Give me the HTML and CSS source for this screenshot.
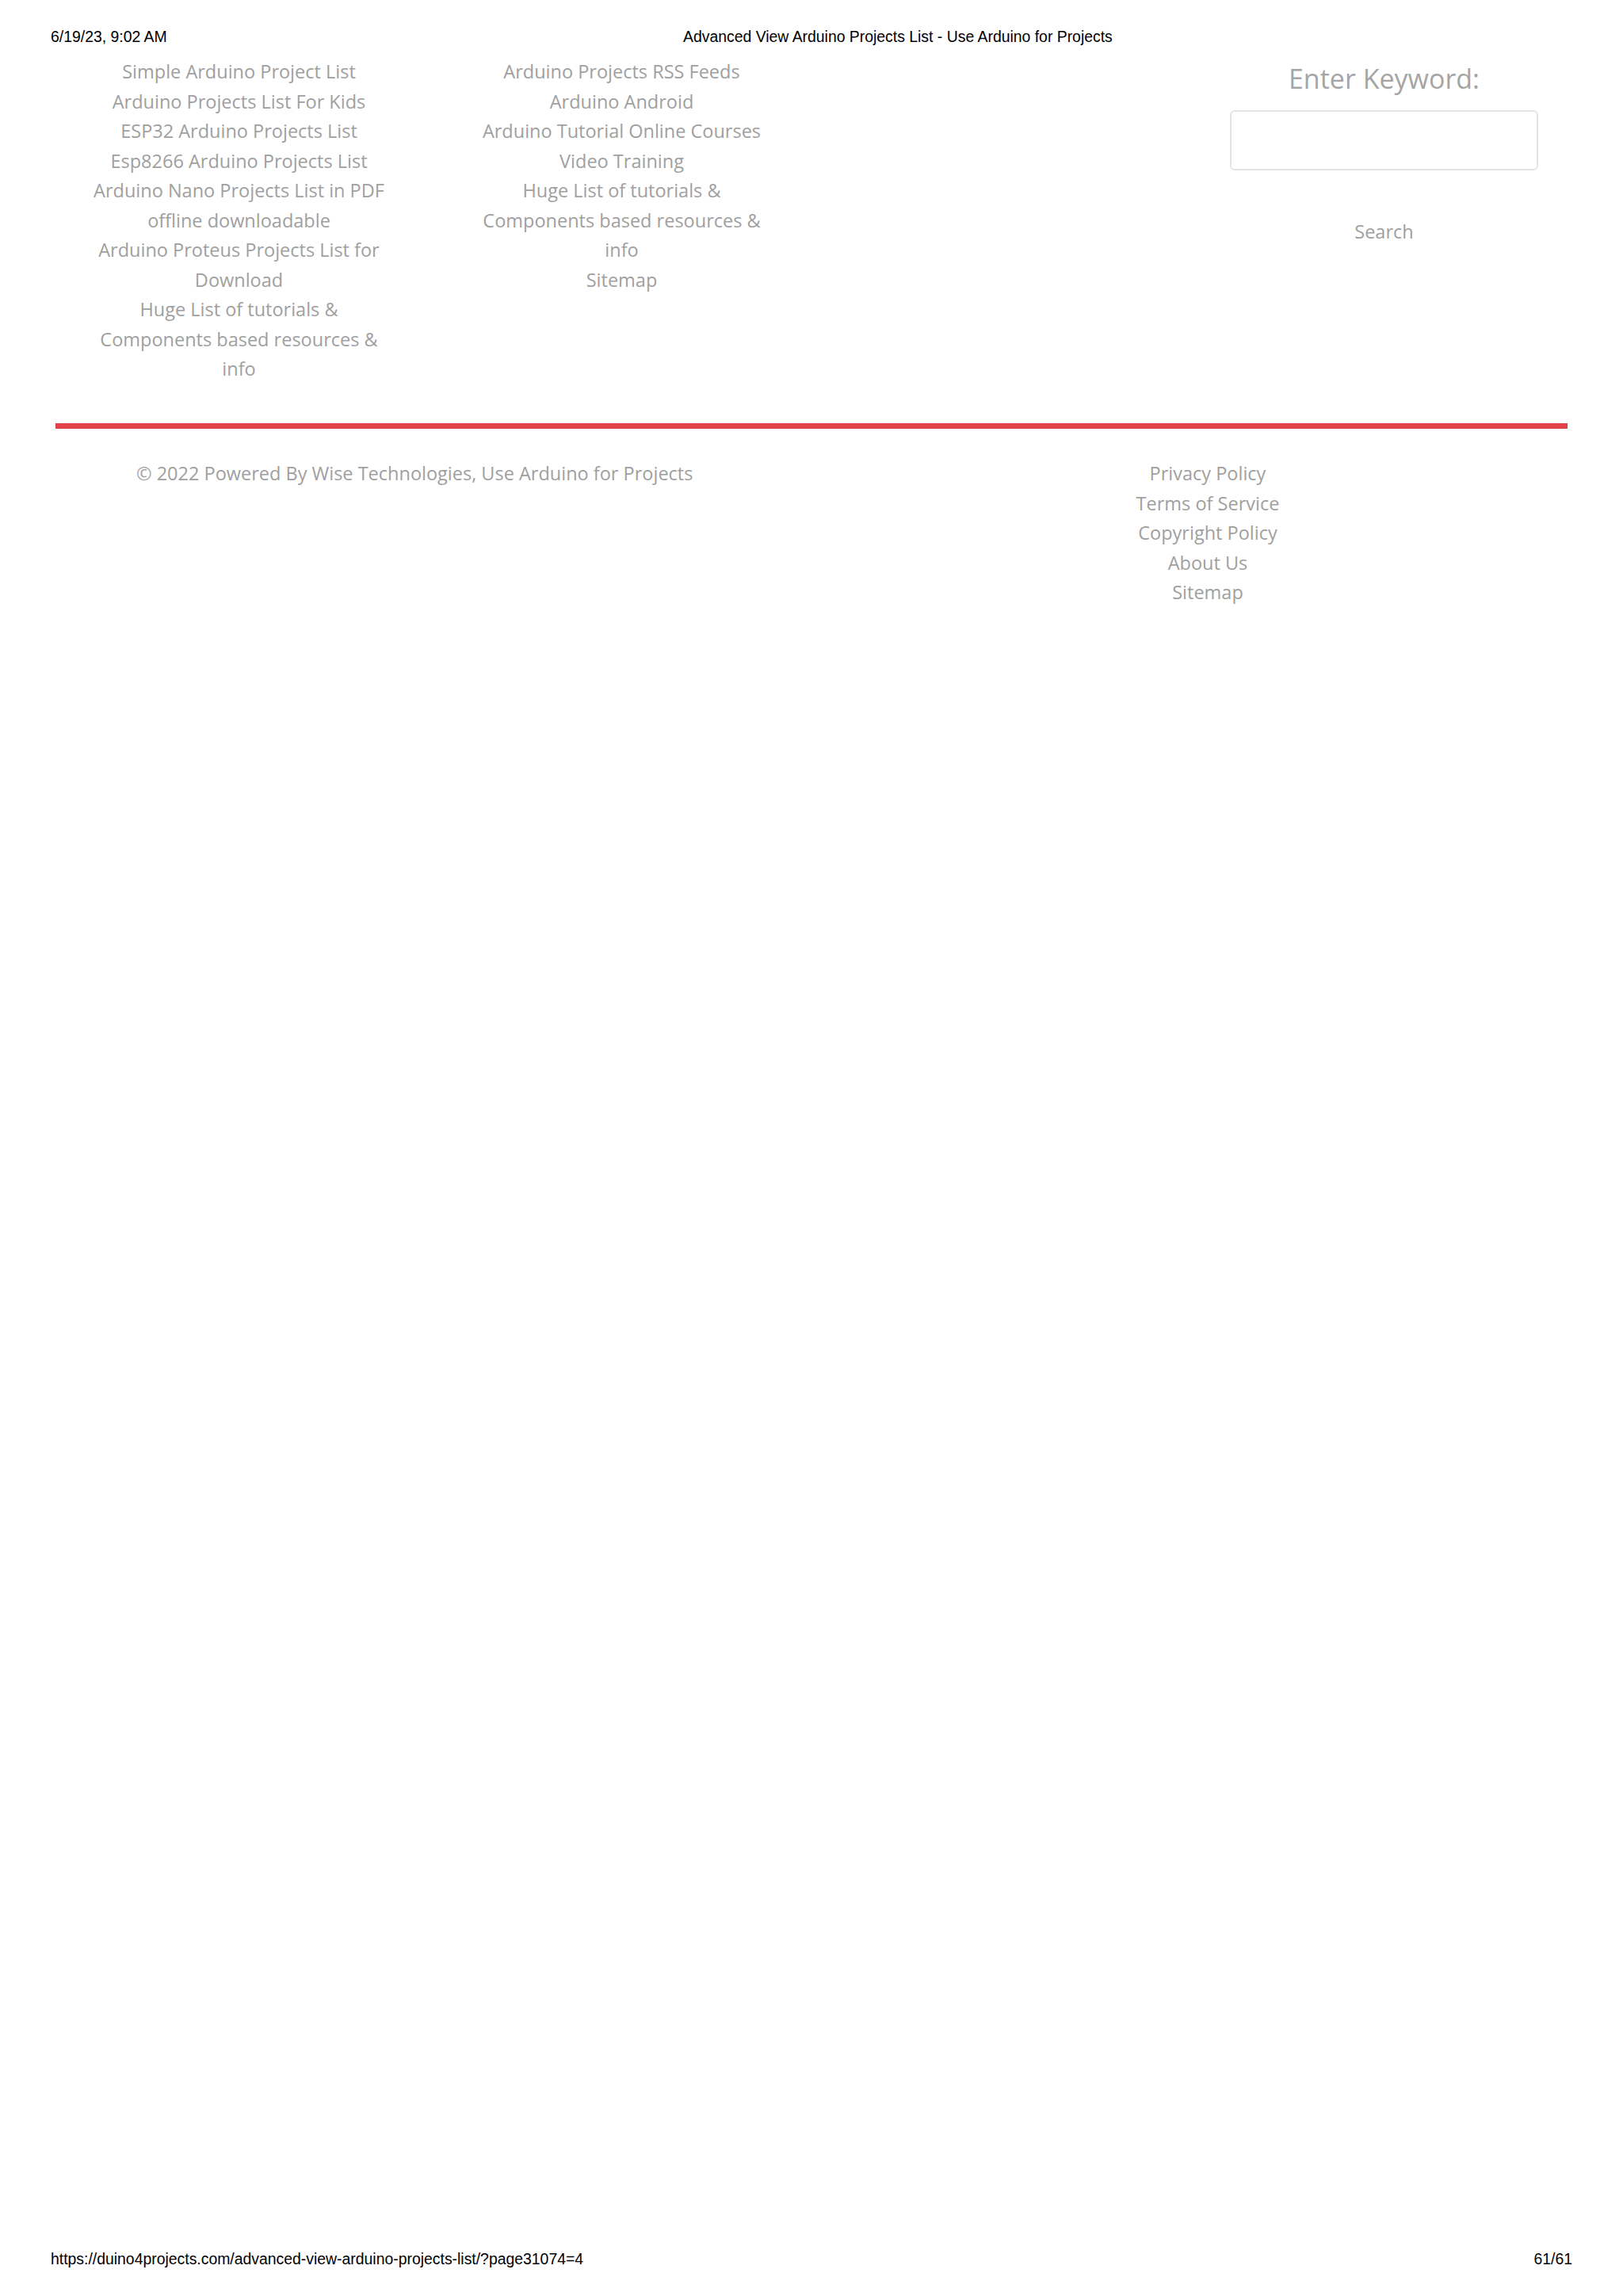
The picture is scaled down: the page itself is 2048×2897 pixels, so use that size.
FILE: index.html
```html
<!DOCTYPE html>
<html lang="en">
<head>
<meta charset="utf-8">
<title>Advanced View Arduino Projects List - Use Arduino for Projects</title>
<link rel="stylesheet" href="styles.css">
</head>
<body>
<div class="page">
  <header class="print-head">
    <span class="print-date">6/19/23, 9:02 AM</span>
    <span class="print-title">Advanced View Arduino Projects List - Use Arduino for Projects</span>
  </header>

  <main class="site">
    <section class="widgets">
      <nav class="col">
        <a href="#">Simple Arduino Project List</a>
        <a href="#">Arduino Projects List For Kids</a>
        <a href="#">ESP32 Arduino Projects List</a>
        <a href="#">Esp8266 Arduino Projects List</a>
        <a href="#">Arduino Nano Projects List in PDF<br>offline downloadable</a>
        <a href="#">Arduino Proteus Projects List for<br>Download</a>
        <a href="#">Huge List of tutorials &amp;<br>Components based resources &amp;<br>info</a>
      </nav>
      <nav class="col">
        <a href="#">Arduino Projects RSS Feeds</a>
        <a href="#">Arduino Android</a>
        <a href="#">Arduino Tutorial Online Courses</a>
        <a href="#">Video Training</a>
        <a href="#">Huge List of tutorials &amp;<br>Components based resources &amp;<br>info</a>
        <a href="#">Sitemap</a>
      </nav>
      <div class="col"></div>
      <form class="col search">
        <h3 class="search-label">Enter Keyword:</h3>
        <input class="search-input" type="text">
        <button class="search-btn" type="button">Search</button>
      </form>
    </section>

    <div class="rule"></div>

    <footer class="site-foot">
      <p class="copy">© 2022 Powered By Wise Technologies, Use Arduino for Projects</p>
      <nav class="foot-links">
        <a href="#">Privacy Policy</a>
        <a href="#">Terms of Service</a>
        <a href="#">Copyright Policy</a>
        <a href="#">About Us</a>
        <a href="#">Sitemap</a>
      </nav>
    </footer>
  </main>

  <footer class="print-foot">
    <span>https://duino4projects.com/advanced-view-arduino-projects-list/?page31074=4</span>
    <span>61/61</span>
  </footer>
</div>
</body>
</html>
```

FILE: styles.css
```css
html, body {
  margin: 0;
  padding: 0;
  background: #ffffff;
}

.page {
  height: 2897px;
  display: flex;
  flex-direction: column;
}

.print-head,
.print-foot {
  font-family: "Liberation Sans", Arial, sans-serif;
  font-size: 19.4px;
  line-height: 24px;
  color: #000;
}

.print-head {
  display: grid;
  grid-template-columns: 798px 1fr;
  padding: 34px 64px 0 64px;
  height: 24px;
}

.print-foot {
  margin-top: auto;
  display: flex;
  justify-content: space-between;
  padding: 0 64px 35px 64px;
}

.site {
  font-family: "Open Sans", "Noto Sans", sans-serif;
  font-size: 23.5px;
  line-height: 37.5px;
  color: #a0a0a0;
}

.widgets {
  display: grid;
  grid-template-columns: repeat(4, 483px);
  margin: 14px 0 0 60px;
  height: 462px;
}

.col {
  display: flex;
  flex-direction: column;
  align-items: center;
  text-align: center;
  padding: 0 47px;
}

.col.search {
  padding: 0 51px 0 43px;
}

.col a,
.foot-links a {
  color: inherit;
  text-decoration: none;
  display: block;
}

.search-label {
  margin: 5px 0 0 0;
  font-size: 34px;
  line-height: 44px;
  font-weight: 400;
  color: #a5a5a5;
}

.search-input {
  box-sizing: border-box;
  width: 389px;
  height: 76px;
  margin-top: 18px;
  border: 2px solid #e4e4e4;
  border-radius: 6px;
  background: #fff;
}

.search-btn {
  margin-top: 59px;
  padding: 0;
  border: 0;
  background: none;
  font: inherit;
  color: #a0a0a0;
}

.rule {
  height: 7px;
  margin: 0 70px 0 70px;
  width: 1908px;
  background: #e2434b;
}

.site-foot {
  display: flex;
  margin-top: 38px;
}

.copy {
  margin: 0 0 0 172px;
  width: 900px;
}

.foot-links {
  display: flex;
  flex-direction: column;
  align-items: center;
  text-align: center;
  width: 400px;
  margin-left: 252px;
}
```
